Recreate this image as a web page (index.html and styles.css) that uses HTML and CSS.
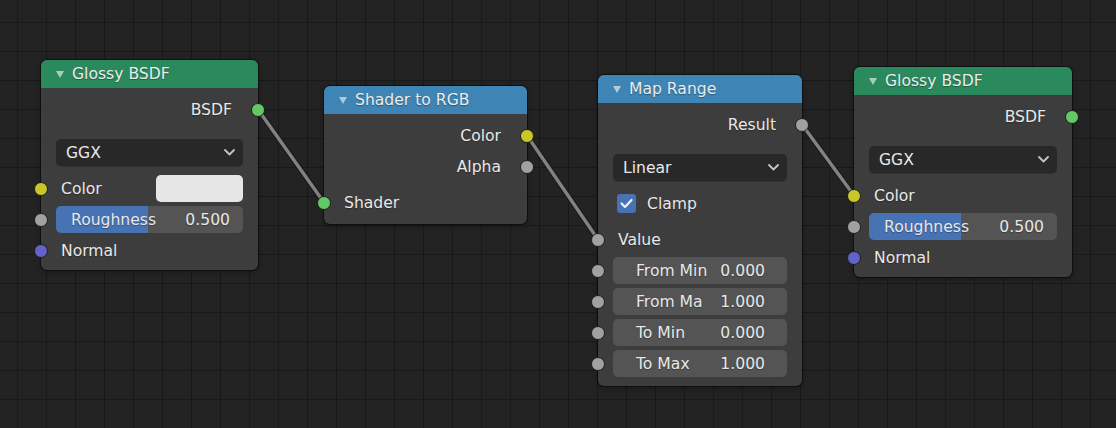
FILE: index.html
```html
<!DOCTYPE html>
<html>
<head>
<meta charset="utf-8">
<link rel="stylesheet" href="styles.css">
</head>
<body>
<div class="canvas">
  <svg class="links" width="1116" height="428" viewBox="0 0 1116 428">
    <g class="link-outline">
      <line x1="258" y1="109.5" x2="324" y2="202.5"/>
      <line x1="527" y1="135.5" x2="598" y2="239.5"/>
      <line x1="802" y1="124.5" x2="854" y2="195.5"/>
    </g>
    <g class="link-core">
      <line x1="258" y1="109.5" x2="324" y2="202.5"/>
      <line x1="527" y1="135.5" x2="598" y2="239.5"/>
      <line x1="802" y1="124.5" x2="854" y2="195.5"/>
    </g>
  </svg>

  <div class="node n1">
    <div class="head shader"><span class="tri"></span><span class="title">Glossy BSDF</span></div>
    <div class="body">
      <div class="row out"><span class="label">BSDF</span><i class="sock s-green sock-r"></i></div>
      <div class="dropdown gap16"><span>GGX</span><svg class="chev" width="11" height="7" viewBox="0 0 11 7"><polyline points="1,1 5.5,5.5 10,1"/></svg></div>
      <div class="row in gap9"><i class="sock s-yellow sock-l"></i><span class="label">Color</span><span class="swatch"></span></div>
      <div class="slider gap4"><i class="sock s-gray sock-l"></i><span class="fl">Roughness</span><span class="fv">0.500</span></div>
      <div class="row in gap4"><i class="sock s-purple sock-l"></i><span class="label">Normal</span></div>
    </div>
  </div>

  <div class="node n2">
    <div class="head conv"><span class="tri"></span><span class="title">Shader to RGB</span></div>
    <div class="body">
      <div class="row out"><span class="label">Color</span><i class="sock s-yellow sock-r"></i></div>
      <div class="row out gap4"><span class="label">Alpha</span><i class="sock s-gray sock-r"></i></div>
      <div class="row in gap9"><i class="sock s-green sock-l"></i><span class="label">Shader</span></div>
    </div>
  </div>

  <div class="node n3">
    <div class="head conv"><span class="tri"></span><span class="title">Map Range</span></div>
    <div class="body body3">
      <div class="row out"><span class="label">Result</span><i class="sock s-gray sock-r"></i></div>
      <div class="dropdown gap16"><span>Linear</span><svg class="chev" width="11" height="7" viewBox="0 0 11 7"><polyline points="1,1 5.5,5.5 10,1"/></svg></div>
      <div class="row check gap9"><span class="box"><svg width="19" height="19" viewBox="0 0 19 19"><polyline points="4.5,9.5 8,13 14.5,6"/></svg></span><span class="clabel">Clamp</span></div>
      <div class="row in gap9"><i class="sock s-gray sock-l"></i><span class="label">Value</span></div>
      <div class="num gap4"><i class="sock s-gray sock-l"></i><span>From Min</span><span>0.000</span></div>
      <div class="num gap4"><i class="sock s-gray sock-l"></i><span>From Ma</span><span>1.000</span></div>
      <div class="num gap4"><i class="sock s-gray sock-l"></i><span>To Min</span><span>0.000</span></div>
      <div class="num gap4"><i class="sock s-gray sock-l"></i><span>To Max</span><span>1.000</span></div>
    </div>
  </div>

  <div class="node n4">
    <div class="head shader"><span class="tri"></span><span class="title">Glossy BSDF</span></div>
    <div class="body">
      <div class="row out"><span class="label">BSDF</span><i class="sock s-green sock-r"></i></div>
      <div class="dropdown gap16"><span>GGX</span><svg class="chev" width="11" height="7" viewBox="0 0 11 7"><polyline points="1,1 5.5,5.5 10,1"/></svg></div>
      <div class="row in gap9"><i class="sock s-yellow sock-l"></i><span class="label">Color</span></div>
      <div class="slider gap4"><i class="sock s-gray sock-l"></i><span class="fl">Roughness</span><span class="fv">0.500</span></div>
      <div class="row in gap4"><i class="sock s-purple sock-l"></i><span class="label">Normal</span></div>
    </div>
  </div>
</div>
</body>
</html>
```

FILE: styles.css
```css
html, body {
  margin: 0;
  padding: 0;
  background: #232323;
}

.canvas {
  position: relative;
  width: 1116px;
  height: 428px;
  overflow: hidden;
  background-color: #232323;
  background-image:
    linear-gradient(to right, #191919 0, #191919 1px, transparent 1px),
    linear-gradient(to bottom, #191919 0, #191919 1px, transparent 1px);
  background-size: 29px 29px;
  background-position: 17px 22px;
  font-family: "DejaVu Sans", "Liberation Sans", sans-serif;
  font-size: 15.6px;
  color: #e8e8e8;
}

.links {
  position: absolute;
  left: 0;
  top: 0;
  z-index: 1;
}

.link-outline line {
  stroke: #1c1c1c;
  stroke-width: 6;
  stroke-linecap: round;
}

.link-core line {
  stroke: #828282;
  stroke-width: 3.4;
  stroke-linecap: round;
}

.node {
  position: absolute;
  z-index: 2;
  box-sizing: border-box;
  background: #3d3d3d;
  border-radius: 6px;
  box-shadow: 0 0 0 1px rgba(0, 0, 0, 0.45), 0 2px 6px rgba(0, 0, 0, 0.35);
  display: flex;
  flex-direction: column;
}

.n1 { left: 41px; top: 60px; width: 217px; height: 210px; }
.n2 { left: 324px; top: 86px; width: 203px; height: 138px; }
.n3 { left: 598px; top: 75px; width: 204px; height: 311px; }
.n4 { left: 854px; top: 67px; width: 218px; height: 210px; }

.head {
  height: 28px;
  flex: none;
  display: flex;
  align-items: center;
  padding-left: 15px;
  border-radius: 6px 6px 0 0;
  text-shadow: 0 1px 1px rgba(0, 0, 0, 0.35);
}

.shader { background: #2a8a5e; }
.conv { background: #3e84b4; }

.tri {
  width: 0;
  height: 0;
  border-left: 4.5px solid transparent;
  border-right: 4.5px solid transparent;
  border-top: 7px solid rgba(225, 235, 230, 0.7);
  margin-right: 8px;
  margin-top: 1px;
}

.title {
  color: #ececec;
}

.body {
  flex: 1;
  padding: 8px 15px 0 15px;
  display: flex;
  flex-direction: column;
}

.row {
  position: relative;
  height: 27px;
  display: flex;
  align-items: center;
  flex: none;
  text-shadow: 0 1px 1px rgba(0, 0, 0, 0.3);
}

.out {
  justify-content: flex-end;
  padding-right: 11px;
}

.in {
  padding-left: 5px;
  justify-content: space-between;
}

.gap4 { margin-top: 4px; }
.gap9 { margin-top: 9px; }
.gap16 { margin-top: 16px; }

.sock {
  position: absolute;
  display: block;
  top: 50%;
  width: 12px;
  height: 12px;
  margin-top: -7px;
  box-sizing: content-box;
  border-radius: 50%;
  border: 1px solid #1e1e1e;
  z-index: 3;
}

.sock-l { left: -22px; }
.sock-r { right: -22px; }

.s-green { background: #63c763; }
.s-yellow { background: #c7c729; }
.s-gray { background: #a1a1a1; }
.s-purple { background: #6363c7; }

.dropdown {
  height: 27px;
  flex: none;
  box-sizing: border-box;
  background: #282828;
  border-radius: 5px;
  display: flex;
  align-items: center;
  justify-content: space-between;
  padding: 0 8px 0 10px;
  box-shadow: 0 1px 0 rgba(0, 0, 0, 0.2);
}

.chev polyline {
  fill: none;
  stroke: #c4c4c4;
  stroke-width: 1.8;
  stroke-linecap: round;
  stroke-linejoin: round;
}

.swatch {
  width: 87px;
  height: 27px;
  background: #e6e6e6;
  border-radius: 5px;
}

.slider {
  position: relative;
  height: 27px;
  flex: none;
  box-sizing: border-box;
  border-radius: 5px;
  background: linear-gradient(to right, #4772b3 0, #4772b3 49.2%, #545454 49.2%, #545454 100%);
  display: flex;
  align-items: center;
  justify-content: space-between;
  padding: 0 13px 0 15px;
  text-shadow: 0 1px 1px rgba(0, 0, 0, 0.3);
}

.num {
  position: relative;
  height: 27px;
  flex: none;
  box-sizing: border-box;
  border-radius: 5px;
  background: #545454;
  display: flex;
  align-items: center;
  justify-content: space-between;
  padding: 0 22px 0 23px;
  text-shadow: 0 1px 1px rgba(0, 0, 0, 0.3);
}

.check {
  padding-left: 4px;
}

.box {
  width: 19px;
  height: 19px;
  border-radius: 3px;
  background: #4772b3;
  display: flex;
}

.box polyline {
  fill: none;
  stroke: #f0f0f0;
  stroke-width: 2.2;
  stroke-linecap: round;
  stroke-linejoin: round;
}

.clabel {
  margin-left: 11px;
}
```
